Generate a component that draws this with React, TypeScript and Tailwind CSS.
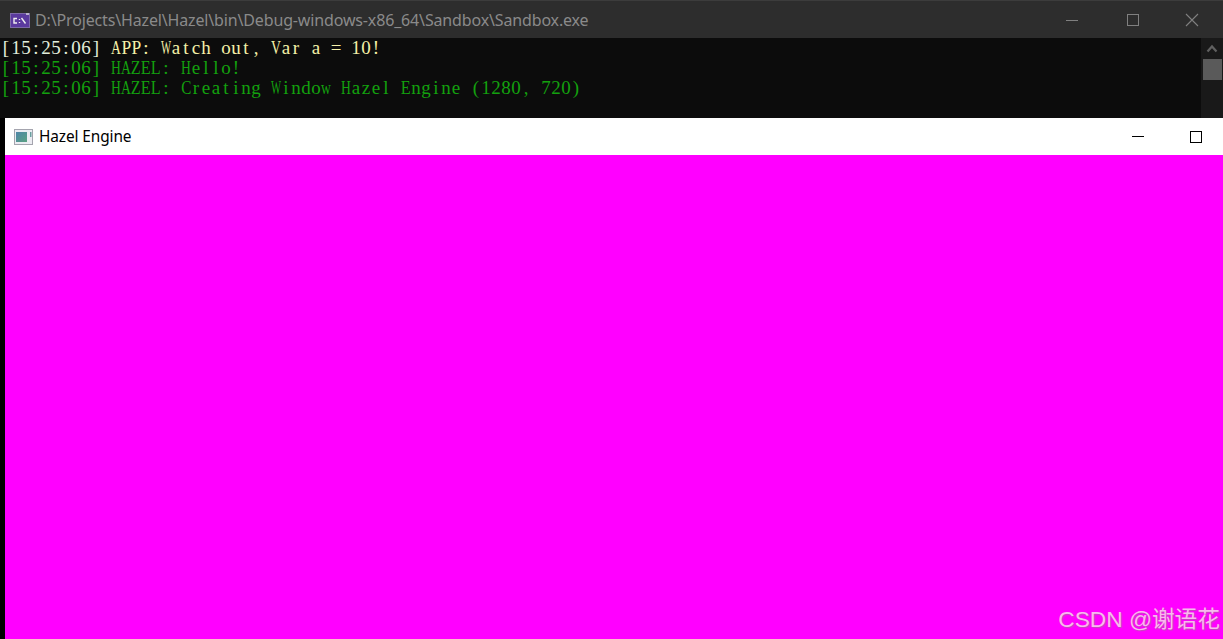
import React from "react";

const sans = "[font-family:'Noto_Sans','Noto_Sans_CJK_SC',sans-serif]";

function ConsoleIcon() {
  return (
    <svg width="20" height="16" viewBox="0 0 20 16" className="shrink-0">
      <rect x="0" y="1" width="20" height="15" fill="#5b3a9e" />
      <rect x="0.5" y="1.5" width="19" height="14" fill="none" stroke="#7d6aa8" />
      <rect x="16" y="1" width="3" height="2" fill="#b9b2cc" />
      <path d="M7 6.5 H4 V11 H7 M9.5 7 V8 M9.5 10 V11 M11.5 6 L15.5 11.5" fill="none" stroke="#eee" strokeWidth="1.4" />
    </svg>
  );
}

function AppIcon() {
  return (
    <svg width="19" height="16" viewBox="0 0 19 16" className="shrink-0">
      <rect x="0.5" y="0.5" width="18" height="15" fill="#ececf2" stroke="#a4a4ae" />
      <defs>
        <linearGradient id="g" x1="0" y1="0" x2="1" y2="1">
          <stop offset="0" stopColor="#4f86a8" />
          <stop offset="1" stopColor="#5aa182" />
        </linearGradient>
      </defs>
      <rect x="2" y="3" width="11" height="10" fill="url(#g)" />
      <rect x="16" y="3" width="1.5" height="5" fill="#6aa0a0" />
    </svg>
  );
}

function squeeze(c: string) {
  switch (c) {
    case "W":
      return "scale-x-[0.56]";
    case "A":
    case "H":
    case "V":
    case "w":
      return "scale-x-[0.72]";
    case "C":
      return "scale-x-[0.8]";
    case "Z":
    case "E":
    case "L":
      return "scale-x-[0.85]";
    case "P":
      return "scale-x-[0.92]";
    default:
      return "";
  }
}

function Cells({ text }: { text: string }) {
  return (
    <>
      {Array.from(text).map((c, i) => (
        <span key={i} className="inline-flex justify-center w-[10px]">
          <span className={`inline-block ${squeeze(c)}`}>{c === " " ? "\u00a0" : c}</span>
        </span>
      ))}
    </>
  );
}

function Line({ color, stamp, text }: { color: string; stamp?: string; text: string }) {
  return (
    <div className={`h-5 leading-5 whitespace-pre ${color}`}>
      <span className={stamp}>
        <Cells text="[15:25:06]" />
      </span>
      <Cells text={" " + text} />
    </div>
  );
}

export default function App() {
  return (
    <div className="w-[1223px] h-[639px] overflow-hidden flex flex-col bg-black">
      <div className={`h-[38px] shrink-0 bg-[#2d2d2d] border-t border-[#3c3c3c] flex items-center pl-[10px] ${sans}`}>
        <ConsoleIcon />
        <span className="ml-[5px] text-[16px] leading-5 text-[#8a8a8a] whitespace-pre tracking-[-0.15px]">
          D:\Projects\Hazel\Hazel\bin\Debug-windows-x86_64\Sandbox\Sandbox.exe
        </span>
        <div className="ml-auto flex items-center h-full">
          <svg width="60" height="16" viewBox="0 0 60 16">
            <path d="M22 8.5 H34" stroke="#808080" strokeWidth="1" />
          </svg>
          <svg width="60" height="16" viewBox="0 0 60 16">
            <rect x="23.5" y="2.5" width="11" height="11" fill="none" stroke="#808080" />
          </svg>
          <svg width="58" height="16" viewBox="0 0 58 16" className="mr-px">
            <path d="M22 2 L34 14 M34 2 L22 14" stroke="#808080" strokeWidth="1.1" />
          </svg>
        </div>
      </div>

      <div className="h-[80px] shrink-0 flex bg-[#0c0c0c]">
        <div className="flex-1 pl-[1px] text-[19px] [font-family:'Liberation_Serif',serif]">
          <Line color="text-[#f4f0a8]" stamp="text-[#e2eedc]" text="APP: Watch out, Var a = 10!" />
          <Line color="text-[#13a10e]" text="HAZEL: Hello!" />
          <Line color="text-[#13a10e]" text="HAZEL: Creating Window Hazel Engine (1280, 720)" />
        </div>
        <div className="w-[22px] shrink-0 bg-[#191919] flex flex-col items-center">
          <svg width="12" height="21" viewBox="0 0 12 21">
            <path d="M1.5 13.5 L6 8.5 L10.5 13.5" fill="none" stroke="#606060" strokeWidth="2.2" />
          </svg>
          <div className="w-[19px] h-[21px] bg-[#5a5a5a]" />
        </div>
      </div>

      <div className="flex-1 flex min-h-0 pl-[5px] bg-black">
        <div className="flex-1 flex flex-col min-w-0">
          <div className={`h-[37px] shrink-0 bg-white flex items-center pl-[9px] ${sans}`}>
            <AppIcon />
            <span className="ml-[6px] text-[15.4px] leading-5 text-black tracking-[-0.1px]">Hazel Engine</span>
            <div className="ml-auto flex items-center">
              <div className="w-3 h-px bg-black mr-[46px]" />
              <div className="w-3 h-3 border border-black mr-[21px]" />
            </div>
          </div>
          <div className="relative flex-1 bg-[#ff00ff]">
            <span className="absolute right-[3px] bottom-[6px] text-[22.7px] leading-7 text-[#f8b8ee] [text-shadow:1px_1px_1px_#c050b8] [font-family:'Liberation_Sans','Noto_Sans_CJK_SC',sans-serif] whitespace-pre">
              CSDN @谢语花
            </span>
          </div>
        </div>
      </div>
    </div>
  );
}
